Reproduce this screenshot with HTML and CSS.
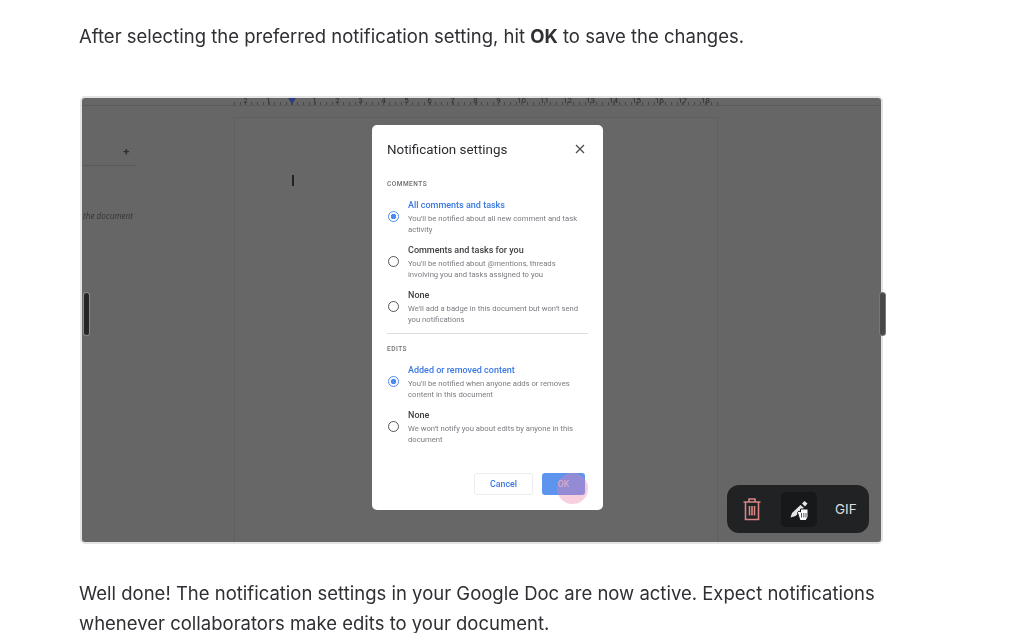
FILE: index.html
```html
<!DOCTYPE html>
<html lang="en">

<head>
  <meta charset="UTF-8" />
  <title>Notification settings</title>
  <link rel="stylesheet" href="styles.css">
</head>

<body>

  <p class="lead">After selecting the preferred notification setting, hit <b>OK</b> to save the changes.</p>

  <div class="frame">
    <div class="ruler">
      <div class="ruler-nums">
        <span>2</span><span>1</span><span class="ruler-gap"></span><span>1</span><span>2</span><span>3</span><span>4</span><span>5</span><span>6</span><span>7</span><span>8</span><span>9</span><span>10</span><span>11</span><span>12</span><span>13</span><span>14</span><span>15</span><span>16</span><span>17</span><span>18</span>
      </div>
      <i class="ruler-marker"></i>
    </div>

    <div class="workspace">
      <div class="outline">
        <div class="outline-head">+</div>
        <div class="outline-note">the document</div>
      </div>
      <div class="doc-page">
        <div class="caret"></div>
      </div>
    </div>

    <div class="modal">
      <div class="modal-head">
        <h2>Notification settings</h2>
        <svg class="close" viewBox="0 0 12 12" width="12" height="12">
          <path d="M2 2l8 8M10 2l-8 8" stroke="#4b4d50" stroke-width="1.3" fill="none" />
        </svg>
      </div>

      <div class="section-title">COMMENTS</div>
      <div class="option selected">
        <span class="radio"></span>
        <div>
          <div class="option-name">All comments and tasks</div>
          <div class="option-desc">You'll be notified about all new comment and task activity</div>
        </div>
      </div>
      <div class="option">
        <span class="radio"></span>
        <div>
          <div class="option-name">Comments and tasks for you</div>
          <div class="option-desc">You'll be notified about @mentions, threads involving you and tasks assigned to you</div>
        </div>
      </div>
      <div class="option">
        <span class="radio"></span>
        <div>
          <div class="option-name">None</div>
          <div class="option-desc">We'll add a badge in this document but won't send you notifications</div>
        </div>
      </div>

      <hr class="divider">

      <div class="section-title">EDITS</div>
      <div class="option selected">
        <span class="radio"></span>
        <div>
          <div class="option-name">Added or removed content</div>
          <div class="option-desc">You'll be notified when anyone adds or removes content in this document</div>
        </div>
      </div>
      <div class="option">
        <span class="radio"></span>
        <div>
          <div class="option-name">None</div>
          <div class="option-desc">We won't notify you about edits by anyone in this document</div>
        </div>
      </div>

      <div class="modal-actions">
        <button class="btn-cancel">Cancel</button>
        <button class="btn-ok">OK</button>
      </div>
      <i class="click-ring"></i>
    </div>

    <div class="handle handle-left"></div>
    <div class="handle handle-right"></div>

    <div class="toolbar">
      <svg class="tool-trash" viewBox="0 0 18 24" width="18" height="24" fill="none" stroke="#d88583" stroke-width="1.6">
        <path d="M0.500 5h17M6 5V2h6v3M2.500 5v17.500h13V5" />
        <path d="M6.500 9v9.500M9 9v9.500M11.500 9v9.500" />
      </svg>
      <div class="tool-active">
        <svg viewBox="0 0 24 24" width="24" height="24">
          <path d="M3.500 20.500l1.500-4.500 8.500-8 3.500 3-8.500 8z" fill="#e6e6e6" />
          <path d="M15 6.500l2.500-2.500 3 2.500-2.500 3z" fill="#e6e6e6" />
          <path d="M10.500 15.500l1.500-1.500 1.500 1V12h7.500v8l-2 3.500h-6z" fill="#fff" stroke="#17181a" stroke-width="1" />
          <path d="M14.500 16v4.500M16.800 16v4.500M19 16v4.500" stroke="#55565a" stroke-width="1" />
        </svg>
      </div>
      <span class="tool-gif">GIF</span>
    </div>
  </div>

  <p class="closing">Well done! The notification settings in your Google Doc are now active. Expect notifications whenever collaborators make edits to your document.</p>

</body>

</html>
```

FILE: styles.css
```css
html,
body {
  height: 633px;
  overflow: hidden;
}

body {
  background: #fff;
  color: #2f3034;
  font-family: Inter, Roboto, sans-serif;
  margin: 0;
  padding: 21px 0 0 79px;
  box-sizing: border-box;
}

.lead,
.closing {
  font-size: 18.500px;
  line-height: 30px;
  margin: 0;
  width: 810px;
  filter: blur(0.25px);
}

.lead b {
  font-weight: 700;
}

.closing {
  margin-top: 34px;
}

.frame {
  position: relative;
  box-sizing: border-box;
  width: 803px;
  height: 448px;
  margin: 45px 0 0 1px;
  border: 2px solid #e4e4e4;
  border-radius: 5px;
  background: #666;
}

/* ruler */
.ruler {
  position: relative;
  box-sizing: border-box;
  height: 8px;
  padding-left: 152px;
  border-bottom: 1px solid #5b5b5b;
  background:
    repeating-linear-gradient(90deg, #474747 0 1px, transparent 1px 5.750px) 152px 4px / 484px 3px no-repeat;
}

.ruler-nums {
  display: flex;
  width: 484px;
  font-family: Roboto, sans-serif;
  font-size: 8px;
  line-height: 6px;
  color: #2e2e2e;
}

.ruler-nums span {
  width: 23px;
  text-align: center;
  filter: blur(0.3px);
}

.ruler-marker {
  position: absolute;
  left: 206px;
  top: 0;
  width: 0;
  height: 0;
  border: 4px solid transparent;
  border-top: 6px solid #2a3c7e;
  border-bottom: 0;
}

/* doc behind the dialog */
.workspace {
  display: flex;
  height: 436px;
}

.outline {
  width: 152px;
  box-sizing: border-box;
  color: #2d2d2d;
}

.outline-head {
  width: 54px;
  height: 49px;
  margin-top: 11px;
  padding: 28px 6px 0 0;
  box-sizing: border-box;
  border-bottom: 1px solid #5a5a5a;
  text-align: right;
  font-size: 11px;
  line-height: 12px;
  font-weight: 700;
}

.outline-note {
  margin: 45px 0 0 1px;
  font-size: 8.200px;
  line-height: 10px;
  font-style: italic;
  color: #333;
  font-family: "Open Sans", sans-serif;
  filter: blur(0.3px);
}

.doc-page {
  width: 484px;
  margin-top: 11px;
  box-sizing: border-box;
  border: 1px solid #5f5f5f;
  border-bottom: 0;
  background: #676767;
  padding: 57px 0 0 57px;
}

.caret {
  width: 2px;
  height: 11px;
  background: #222;
}

/* dialog */
.modal {
  position: absolute;
  left: 290px;
  top: 27px;
  box-sizing: border-box;
  width: 231px;
  height: 385px;
  padding: 16px 15px 0;
  background: #fff;
  border-radius: 5px;
  font-family: Roboto, sans-serif;
  filter: blur(0.4px);
}

.modal-head {
  display: flex;
  justify-content: space-between;
  align-items: center;
  height: 18px;
}

.modal-head h2 {
  margin: 0;
  font-size: 13.400px;
  line-height: 18px;
  font-weight: 400;
  color: #2c2d30;
}

.close {
  margin: 0 2px 2px 0;
}

.section-title {
  margin-top: 21px;
  margin-bottom: 12px;
  font-size: 6.500px;
  line-height: 8px;
  letter-spacing: 0.500px;
  font-weight: 500;
  color: #6a6d71;
}

.section-title + .option {
  margin-top: 0;
}

.option {
  display: flex;
  align-items: center;
  gap: 9px;
  height: 35px;
  margin-top: 10px;
}

.radio {
  flex: none;
  box-sizing: border-box;
  width: 11px;
  height: 11px;
  margin: 0 0 3px 1px;
  border: 1.500px solid #55585c;
  border-radius: 50%;
  background: #fff;
}

.selected .radio {
  border-color: #4d8af0;
  background: radial-gradient(circle, #4d8af0 0 2.500px, #fff 3px);
}

.option-name {
  font-size: 9px;
  line-height: 11px;
  font-weight: 500;
  color: #3d3f42;
}

.selected .option-name {
  color: #3b78e3;
}

.option-desc {
  margin-top: 2px;
  font-size: 7.700px;
  line-height: 11px;
  color: #7a7c80;
  width: 178px;
}

.divider {
  border: 0;
  height: 1px;
  background: #dcdddf;
  margin: 8px 0 0;
}

.divider + .section-title {
  margin-top: 11px;
}

.modal-actions {
  display: flex;
  justify-content: flex-end;
  gap: 9px;
  margin-top: 28px;
  padding-right: 3px;
}

.modal-actions button {
  height: 22px;
  padding: 0;
  border-radius: 3px;
  font-family: Roboto, sans-serif;
  font-size: 8.800px;
  font-weight: 500;
}

.btn-cancel {
  width: 59px;
  background: #fff;
  border: 1px solid #eceded;
  color: #3b78e3;
}

.btn-ok {
  width: 43px;
  background: #5d94ee;
  border: 0;
  color: #c9c3d8;
}

.click-ring {
  position: absolute;
  left: 185px;
  top: 348px;
  width: 31px;
  height: 31px;
  border-radius: 50%;
  background: rgba(236, 130, 170, 0.38);
}

/* resize handles */
.handle {
  position: absolute;
  top: 195px;
  width: 5px;
  height: 42px;
  border-radius: 3px;
  background: #252525;
  box-shadow: 0 0 0 1px #8a8a8a;
}

.handle-left {
  left: 2px;
}

.handle-right {
  left: 798px;
  background: #484848;
  box-shadow: 0 0 0 1px #777;
}

/* bottom right tools */
.toolbar {
  position: absolute;
  left: 645px;
  top: 387px;
  box-sizing: border-box;
  width: 142px;
  height: 48px;
  border-radius: 12px;
  background: #212224;
  display: flex;
  align-items: center;
  padding-left: 16px;
}

.tool-trash {
  flex: none;
}

.tool-active {
  display: flex;
  align-items: center;
  justify-content: center;
  width: 36px;
  height: 35px;
  margin-left: 20px;
  border-radius: 5px;
  background: #17181a;
}

.tool-gif {
  margin-left: 18px;
  font-size: 13.500px;
  font-weight: 400;
  color: #dedede;
}
```
